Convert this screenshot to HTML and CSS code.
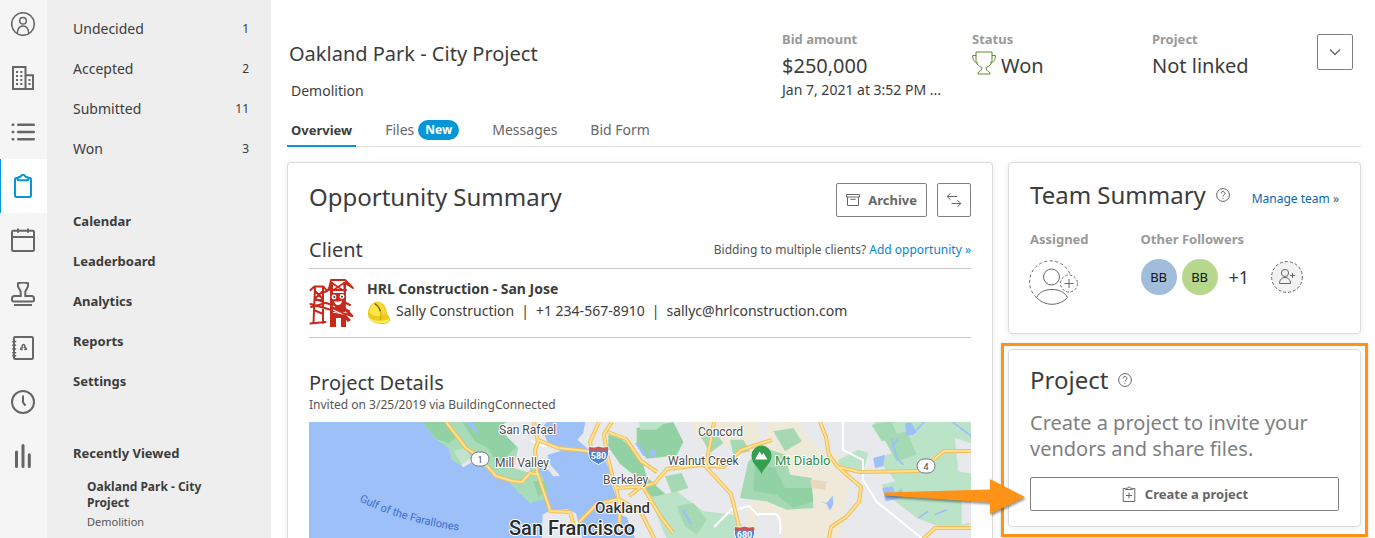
FILE: index.html
```html
<!DOCTYPE html>
<html lang="en">
<head>
<meta charset="utf-8">
<title>Oakland Park - City Project</title>
<link rel="stylesheet" href="styles.css">
</head>
<body>
<div class="app">
  <nav class="rail" aria-label="Main">
    <a class="rail-item rail-first" href="#" aria-label="Account"><svg class="ic24" viewBox="0 0 24 24"><circle cx="12" cy="12" r="11.3"/><circle cx="12" cy="8.800" r="3.300"/><path d="M6.300 21.500c.2-4.800 2.200-7.600 5.700-7.600s5.500 2.800 5.700 7.600"/></svg></a>
    <a class="rail-item" href="#" aria-label="Company"><svg class="ic24 thick" viewBox="0 0 24 24"><path d="M2 1h12.500v22H2zM14.500 9.300H22V23h-7.500"/><path class="dots" d="M5 6h2M9.300 6h2M5 10h2M9.300 10h2M5 14h2M9.300 14h2M5 18h2M9.300 18h2M17.500 14h2M17.500 18h2"/></svg></a>
    <a class="rail-item" href="#" aria-label="List"><svg class="ic24 heavy" viewBox="0 0 24 24"><path d="M7.200 4.800h15.600M7.200 12h15.600M7.200 19.200h15.600M1.700 4.800h.6M1.700 12h.6M1.700 19.200h.6"/></svg></a>
    <a class="rail-item active" href="#" aria-label="Bids"><svg class="ic24 thick" viewBox="0 0 24 24"><path d="M6.500 4H5.200Q4 4 4 5.200v16.600Q4 23 5.200 23h13.600q1.200 0 1.200-1.200V5.200Q20 4 18.800 4h-1.300"/><path d="M6.500 5q0-2 3-2.300Q10.500.8 12 .8t2.500 1.900q3 .3 3 2.300 0 1.300-1.200 1.300H7.700Q6.500 6.300 6.500 5z"/></svg></a>
    <a class="rail-item" href="#" aria-label="Calendar"><svg class="ic24 thick" viewBox="0 0 24 24"><rect x="1" y="2.800" width="22" height="20.200" rx="1.200"/><path d="M1 9h22M7 .5v4.300M17 .5v4.300"/></svg></a>
    <a class="rail-item" href="#" aria-label="Approvals"><svg class="ic24 thick" viewBox="0 0 24 24"><path d="M9.700 14V9.500L7 4.500V1.200Q12-.2 17 1.200v3.300l-2.700 5V14h6.200q2.500 0 2.500 2.600v1.200q0 1.700-1.700 1.700H2.700Q1 19.500 1 17.800v-1.200Q1 14 3.500 14zM3 23h18"/></svg></a>
    <a class="rail-item" href="#" aria-label="Contacts"><svg class="ic24" viewBox="0 0 24 24"><rect class="w2" x="3" y="1" width="19" height="22" rx="1.200"/><path d="M1.200 5.500h4M1.200 9.300h4M1.200 13h4M1.200 16.700h4M1.200 19.700h4"/><path d="M9.500 13.800v-.6q0-1.400 1.900-1.700-.9-2.700 1.100-2.900 2 .2 1.100 2.900 1.900.3 1.900 1.700v.6M9.500 13.500h2.200M13.300 13.500h2.200"/></svg></a>
    <a class="rail-item" href="#" aria-label="History"><svg class="ic24 thick" viewBox="0 0 24 24"><circle cx="12" cy="12" r="11"/><path d="M12 5.500v7l2.500 3"/></svg></a>
    <a class="rail-item" href="#" aria-label="Statistics"><svg class="ic24 bars" viewBox="0 0 24 24"><path d="M5.500 8v14.500M12 1.500v21M18.300 10.700v11.800"/></svg></a>
  </nav>

  <aside class="side">
    <ul class="side-group">
      <li><a class="side-link" href="#"><span>Undecided</span><span class="count">1</span></a></li>
      <li><a class="side-link" href="#"><span>Accepted</span><span class="count">2</span></a></li>
      <li><a class="side-link" href="#"><span>Submitted</span><span class="count">11</span></a></li>
      <li><a class="side-link" href="#"><span>Won</span><span class="count">3</span></a></li>
    </ul>
    <ul class="side-group strong">
      <li><a class="side-link" href="#">Calendar</a></li>
      <li><a class="side-link" href="#">Leaderboard</a></li>
      <li><a class="side-link" href="#">Analytics</a></li>
      <li><a class="side-link" href="#">Reports</a></li>
      <li><a class="side-link" href="#">Settings</a></li>
    </ul>
    <h2 class="side-title">Recently Viewed</h2>
    <a class="recent" href="#"><strong>Oakland Park - City Project</strong><span>Demolition</span></a>
  </aside>

  <main class="main">
    <header class="head">
      <div class="head-title">
        <h1>Oakland Park - City Project</h1>
        <p>Demolition</p>
      </div>
      <div class="stat stat-bid">
        <span class="label">Bid amount</span>
        <span class="value">$250,000</span>
        <span class="date">Jan 7, 2021 at 3:52 PM ...</span>
      </div>
      <div class="stat stat-status">
        <span class="label">Status</span>
        <span class="value"><svg class="trophy" viewBox="0 0 24 24"><path d="M4 1h16v8.500c0 3.500-3 6-6 7 0 1.800 1 3.500 4 5.200V23H6v-1.300c3-1.700 4-3.400 4-5.200-3-1-6-3.500-6-7zM4 4.500H.7c0 4.500 1.300 6.500 5 7.500M20 4.500h3.300c0 4.500-1.300 6.500-5 7.500"/></svg>Won</span>
      </div>
      <div class="stat stat-project">
        <span class="label">Project</span>
        <span class="value">Not linked</span>
      </div>
      <button class="more" type="button" aria-label="More actions"><svg viewBox="0 0 14 14"><path d="M2 4.500l5 5 5-5"/></svg></button>
    </header>

    <nav class="tabs" aria-label="Sections">
      <a class="tab current" href="#">Overview</a>
      <a class="tab" href="#">Files<span class="pill">New</span></a>
      <a class="tab" href="#">Messages</a>
      <a class="tab" href="#">Bid Form</a>
    </nav>

    <div class="cols">
      <section class="card summary">
        <div class="card-head">
          <h2>Opportunity Summary</h2>
          <div class="actions">
            <button class="btn archive" type="button"><svg class="ic14" viewBox="0 0 14 14"><path d="M.5 1.500h13v2.500H.5zM1.500 4v8.500h11V4M4.300 6.300h5.400"/></svg>Archive</button>
            <button class="btn square" type="button" aria-label="Swap"><svg class="ic16" viewBox="0 0 16 16"><path d="M11 4.500H1.200M4.500 1.200L1.200 4.500l3.300 3.300M5.500 11.500h9.300M11.500 8.200l3.300 3.300-3.300 3.300"/></svg></button>
          </div>
        </div>
        <div class="client-head">
          <h3>Client</h3>
          <p>Bidding to multiple clients? <a href="#">Add opportunity »</a></p>
        </div>
        <div class="client">
          <svg class="logo" viewBox="0 0 46 48" aria-hidden="true">
            <g fill="none" stroke="#c72a1c" stroke-width="2" stroke-linecap="round" stroke-linejoin="round">
              <path d="M1.500 11l4-3.500h9l3 4M6 8L4.500 44M14 8v36M1.500 44.500l15-1.500M6 12l8 8M5.500 20L14 12M5.500 21H14M15 13c5 0 6-6 7-12h14l7 7M36 4l8 5M21 11h16M1.500 25l42 12M6 20l34 12M2 28l13-3.500M37 24l4 2M5 31l9 4"/>
            </g>
            <path fill="#c72a1c" d="M21 3h3v45h-3zM34 3h3v45h-5v-9h-5v9h-6V33l16 3zM22 14h14v19H22zM36 28l8 8-2 2-8-8zM37 36l5 5-3 2-4-4z"/>
            <path fill="none" stroke="#c72a1c" stroke-width="1.600" d="M23 4l12 8M35 4l-12 8"/>
            <path fill="none" stroke="#fff" stroke-width="1.200" d="M24 31l9 4M24 27l2 1"/>
            <circle cx="25" cy="18" r="2.400" fill="#fff"/><circle cx="33" cy="17.500" r="2.400" fill="#fff"/>
            <circle cx="25.300" cy="18" r="1" fill="#23356e"/><circle cx="33" cy="17.700" r="1" fill="#23356e"/>
            <path fill="#fff" d="M25 22q4 1.500 8-.5-.5 4.500-4 4.500-3 0-4-4z"/>
          </svg>
          <div class="client-info">
            <strong>HRL Construction - San Jose</strong>
            <div class="contact">
              <svg class="helmet" viewBox="0 0 24 24" aria-hidden="true">
                <path fill="#eccb1c" d="M1 14C.3 7 5 1 10.500.8 16 1 19.500 6 19.800 12l3.400 5.500c.6 3.500-4 5.900-9.200 5.500C8 22.500 1.500 20 1 14z"/>
                <path fill="#fbe748" d="M2.500 11.500C3 6 5 3.500 8 2c3.500 3 5.500 7.500 5.700 12.500C9.500 16 5 15 2.500 11.500z"/>
                <path fill="#f8dc35" d="M10.500 1.500c4.500.5 7.500 5 8 10.500l-4 2.500c-.3-5-1.500-9-5-12.500z"/>
                <path fill="#fdee62" d="M1.500 16c3 3 7 4 11 3.700 4.500.5 8-.7 9.800-2.700 1 3-3 5.300-8 5-6-.5-11-2-12.800-6z"/>
                <path fill="none" stroke="#6c5a10" stroke-width="1.300" d="M7.500 2.500c3 2 5 4.500 6 8"/>
                <path fill="none" stroke="#cda70f" d="M13.500 10c.7 2 .6 5-.3 9"/>
              </svg>
              <span>Sally Construction</span><span class="bar">|</span><span>+1 234-567-8910</span><span class="bar">|</span><span>sallyc@hrlconstruction.com</span>
            </div>
          </div>
        </div>
        <h3 class="details-title">Project Details</h3>
        <p class="details-note">Invited on 3/25/2019 via BuildingConnected</p>
        <svg class="map" viewBox="0 0 662 160" preserveAspectRatio="xMinYMin slice" role="img" aria-label="Map of the San Francisco Bay Area">
          <rect width="662" height="160" fill="#9dc0f9"/>
          <g transform="translate(-4 -4) scale(.3333)">
            <path fill="#a8dcb8" d="M345 0l45 62 40 28 10 35 35 22 25-20 62 34 50 30 28 32 37 34 20-16V0z"/>
            <path fill="#92d1a4" d="M350 8l42 55 40 12 20-15-30-50zM470 10l40 60 40 20 30 50 60-60 20-70z"/>
            <path fill="#bfe3cb" d="M445 100l40-12 15 30-30 20z"/>
            <path fill="#e7e9ec" d="M468 140l27-18 10 8-30 18zM590 20l20-10h85v160l-70-20 15-60-40-40z"/>
            <path fill="#9dc0f9" d="M480 12l30 30 12 5-20-35zM478 90l22 12-2 12z"/>
          </g>
          <g transform="translate(221 -4) scale(.3333)">
            <path fill="#e7e9ec" d="M0 0h62l-28 30 20 45 38 24-40 12 10 30 28 32-20 2-24-30-36-5z"/>
            <path fill="#a8dcb8" d="M0 145l30 20 25 45-15 35-40 10z"/>
            <path fill="#92d1a4" d="M10 190l35 0 10 25-30 22z"/>
            <path fill="#e7e9ec" d="M38 290l20-12 55-4 25 12 20 80-10 150H30zM168 0l-8 45-18 20 35 30 38 15 20 35 10 55 15 40-60 18 30 15 60 25 40 100 100 100h1000V0z"/>
            <path fill="#efe9da" d="M480 0h210v90l-40 20-60-30-40 10-50-30zM720 0h220l20 180-30 180 140 160H650V300z"/>
            <path fill="#92d1a4" d="M235 50l40 12 60 60 15 55 60 55-45 5-35-50-60-50-35-50zM320 30l110-18 30 60-20 40-90 10-30-40z"/>
            <path fill="#bbe3c8" d="M325 0l95 0-40 35-50 0zM360 240l80-20 80 60 90 10 50 60-60 100H450l-50-110z"/>
            <path fill="#a4d9b3" d="M405 175l50-10 20 45-50 15zM440 265l50-10 40 50-30 45-35-25zM510 50l40-15 30 40-40 30zM600 65l40 0 20 35-50 10z"/>
            <path fill="#9dc0f9" d="M315 75l25 40 8-5-20-35zM358 98l22-5-2 20-20 5zM455 275l25 45 6-4-22-40z"/>
          </g>
          <g transform="translate(446 -4) scale(.3333)">
            <path fill="#a4d9b3" d="M-20 130l50-40 60 20 15 60 65 10 5 90-80 5-60-25-80-10zM55 40l60-10 25 40-50 30z"/>
            <path fill="#92d1a4" d="M0 140l60 10 30 60 80 0 5 40-60 20-50-40-70-10z"/>
            <path fill="#e7e9ec" d="M135 0h220l-10 60 45 60-60 60-10-55-60-10-60-20-50-50zM0 290l70-5 10 80-60 30-20-30z"/>
            <path fill="#bbe3c8" d="M345 0h320v240l-40 40 20 40-80 10-80-30-90-70-20-40 20-30-25-40 60-20-40-50zM250 125l60-30 30 10-15 55-75-10z"/>
            <path fill="#a4d9b3" d="M350 20l60-10 20 50-50 10zM385 60l70-20 30 70-60 20z"/>
            <path fill="#e7e9ec" d="M600 60l60 20v90l-50-10zM360 170l40-10 20 30-40 10zM620 250h40v60l-40 10z"/>
            <path fill="#e7d9bd" d="M165 185l50 5-5 25-40-5z"/>
            <path fill="#9dc0f9" d="M195 250l20 5 18-22 2 25-10 20-10-20zM382 210l30-5 10 20 20-15 0 30-50 10zM355 120l35-10-5 35-25 5zM450 15l20 0 15 30-30 10z"/>
            <path fill="none" stroke="#9dc0f9" stroke-width="5" d="M430 60l-20 30M470 50l40-40M590 10l60 45M410 60l15 60 20 20M490 300l30-20M540 290l35-15"/>
          </g>
          <g fill="none" stroke="#fff" stroke-width="2">
            <path d="M534 0v28l20 10v20l14 22 47 38M446 92h20q7 2 5 20M222 18q10 7 16 6M425 88l15-4 10 10M405 105l20-20"/>
          </g>
          <g fill="none" stroke="#f2bd5b" stroke-width="4" stroke-linejoin="round">
            <path d="M137 0l20 26 12 8 18 20 16 5 10 1 8-9 9 2M225 0l4 20-3 8 2 22 12 35 1 4 20 1 4 14M229 18l20 8 30 3M290 0l-9 20 1 4M303 0l-8 12 3 20 5 20 7 26 1 30M299 10l18 7 15 22 16 11M308 66l16-1 14-1M270 100l18-18 22-5 22 13 15 30M320 74l12-9 14-4 12-14 34-4 22 2 18-17 15-5 16-5M334 65l18 30 12 16M405 0l-7 38-2 6 26 28 5 20 7 30M511 0l6 15 3 18 9 12 22 5 60-1M529 45l23 20-2 15-13 15-15 10-3 18M617 44l18-15h27M662 106h-36l-15 14"/>
          </g>
          <g fill="none" stroke="#fde293" stroke-width="2" stroke-linejoin="round">
            <path d="M137 0l20 26 12 8 18 20 16 5 10 1 8-9 9 2M225 0l4 20-3 8 2 22 12 35 1 4 20 1 4 14M229 18l20 8 30 3M290 0l-9 20 1 4M303 0l-8 12 3 20 5 20 7 26 1 30M299 10l18 7 15 22 16 11M308 66l16-1 14-1M270 100l18-18 22-5 22 13 15 30M320 74l12-9 14-4 12-14 34-4 22 2 18-17 15-5 16-5M334 65l18 30 12 16M405 0l-7 38-2 6 26 28 5 20 7 30M511 0l6 15 3 18 9 12 22 5 60-1M529 45l23 20-2 15-13 15-15 10-3 18M617 44l18-15h27M662 106h-36l-15 14"/>
          </g>
          <g fill="#fff" stroke="#757a80"><rect x="162" y="30" width="18" height="14" rx="7"/><rect x="608" y="37" width="18" height="14" rx="7"/></g>
          <g class="shield-no"><text x="171" y="41">1</text><text x="617" y="48">4</text></g>
          <g><path fill="#4f86d0" stroke="#fff" d="M280 25h19q2 7-1 12-3 3-8.500 5.500Q284 40 281 37q-3-5-1-12z"/><path fill="#d2554d" d="M280 25l5 1 4.500-1.500 4.500 1.500 5-1 .5 3.500h-20z"/></g>
          <g><path fill="#4f86d0" stroke="#fff" d="M426 105h19q2 7-1 12-3 3-8.500 5.500Q430 120 427 117q-3-5-1-12z"/><path fill="#d2554d" d="M426 105l5 1 4.500-1.500 4.500 1.500 5-1 .5 3.500h-20z"/></g>
          <g class="shield-label"><text x="289.500" y="37">580</text><text x="435.500" y="116">680</text></g>
          <path fill="#34a04f" d="M452.500 52c-2-6-10-10-10-18.500a10 10 0 0 1 20 0c0 8.500-8 12.500-10 18.500z"/>
          <path fill="#fff" d="M446 37.500l4.500-8 2.500 3.500 1.500-2 4 6.500z"/>
          <g class="town">
            <text x="190" y="12">San Rafael</text><text x="186" y="45">Mill Valley</text><text x="389" y="14">Concord</text>
            <text x="359" y="43">Walnut Creek</text><text x="294" y="62">Berkeley</text>
            <text class="city" x="286" y="91">Oakland</text><text class="big" x="200" y="113">San Francisco</text>
            <text class="peak" x="466" y="43">Mt Diablo</text>
          </g>
          <path id="gulf" fill="none" d="M50 79Q95 102 160 110"/>
          <text class="sea"><textPath href="#gulf">Gulf of the Farallones</textPath></text>
          <path fill="#c5342f" d="M553 116h19v6h-19z"/>
        </svg>
      </section>

      <div class="right">
        <section class="card team">
          <div class="team-head">
            <h2>Team Summary</h2>
            <svg class="help" viewBox="0 0 14 14"><circle cx="7" cy="7" r="6.400"/><path d="M5 5.500c0-2.700 4-2.500 4-.2 0 1.500-2 1.500-2 3.200M7 9.800v1"/></svg>
            <a href="#">Manage team »</a>
          </div>
          <div class="people">
            <div class="assigned">
              <span class="label">Assigned</span>
              <button class="bare" type="button" aria-label="Assign a person"><svg class="assign" viewBox="0 0 48 44">
                <path stroke-dasharray="3 2.500" d="M6.500 36.500A21 21 0 1 1 40 13"/><path d="M6.500 36.500a21 21 0 0 0 31 0M6.500 36.500c3-5.500 8-8 15.500-8s12.500 2.500 15.500 8"/><circle cx="21.500" cy="16" r="8"/>
                <circle cx="39" cy="22.500" r="8.500" stroke-dasharray="2.500 2"/><path d="M39 18v9M34.500 22.500h9"/></svg></button>
            </div>
            <div class="followers">
              <span class="label">Other Followers</span>
              <div class="avatars"><span class="avatar blue">BB</span><span class="avatar green">BB</span><span class="extra">+1</span>
                <button class="bare add" type="button" aria-label="Add follower"><svg viewBox="0 0 32 32"><circle class="ring" cx="16" cy="16" r="15.400"/><circle cx="14" cy="12" r="3.600"/><path d="M8.500 22.500c0-8 11-8 11 0zM21.500 12v5M19 14.500h5"/></svg></button></div>
            </div>
          </div>
        </section>

        <section class="card project">
          <div class="project-head"><h2>Project</h2><svg class="help" viewBox="0 0 14 14"><circle cx="7" cy="7" r="6.400"/><path d="M5 5.500c0-2.700 4-2.500 4-.2 0 1.500-2 1.500-2 3.200M7 9.800v1"/></svg></div>
          <p>Create a project to invite your vendors and share files.</p>
          <button class="btn wide" type="button"><svg class="ic16" viewBox="0 0 16 16"><path d="M4.500 2.500H2.200v13h11.600v-13h-2.300M4.500 3.500q0-1.500 2-1.500Q8-.5 9.500 2q2 0 2 1.500zM8 6.500v6M5 9.500h6"/></svg>Create a project</button>
          <span class="frame"></span>
          <svg class="arrow" viewBox="0 0 144 40" aria-hidden="true"><path d="M3 15.500q-1.500 1 0 3l105 7V37l35-17L108 2v10.500z"/></svg>
        </section>
      </div>
    </div>
  </main>
</div>
</body>
</html>
```

FILE: styles.css
```css
* { box-sizing: border-box; }
body { margin: 0; font: 14px/18px "Noto Sans", "Open Sans", sans-serif; color: #3c3c3c; background: #fff; }
h1, h2, h3, p, ul { margin: 0; padding: 0; font-weight: 400; }
ul { list-style: none; }
a { color: inherit; text-decoration: none; }
button { font: inherit; cursor: pointer; }
svg { display: block; flex: none; fill: none; stroke: #666; }

.app { display: grid; grid-template-columns: 47px 224px 1fr; height: 100vh; overflow: hidden; }

.rail { background: #f5f5f5; }
.rail-item { display: flex; align-items: center; justify-content: center; height: 54px; padding-right: 1px; }
.rail-first { height: 51px; padding-bottom: 3px; }
.rail-item.active { background: #fff; border-left: 1px solid #0696d7; padding-right: 2px; }
.active svg { stroke: #0696d7; }
.ic24 { width: 24px; height: 24px; stroke-width: 1.5; }
.thick, .w2 { stroke-width: 2; }
.dots { stroke-width: 2; }
.heavy { stroke-width: 2.4; stroke-linecap: round; }
.bars { stroke-width: 3; stroke-linecap: round; }

.side { background: #eee; padding: 9px 22px 0 26px; }
.side-group { margin-bottom: 32px; }
.side-link { display: flex; align-items: center; justify-content: space-between; height: 40px; }
.count { font-size: 12px; }
.strong, .side-title { font-size: 13px; font-weight: 700; }
.side-title { line-height: 40px; }
.recent { display: block; padding: 6px 28px 0 14px; font-size: 12px; line-height: 16px; }
.recent strong, .recent span { display: block; }
.recent strong { font-weight: 700; }
.recent span { margin-top: 3px; font-size: 11px; color: #555; }

.main { padding: 0 14px 0 16px; min-width: 0; }
.head { display: flex; height: 113px; padding: 30px 8px 0 0; }
.head-title { flex: 1; padding: 10px 0 0 2px; }
h1 { font-size: 20px; line-height: 28px; }
.head-title p { margin: 14px 0 0 2px; }
.stat { display: flex; flex-direction: column; white-space: nowrap; }
.stat-bid { width: 190px; }
.stat-status { width: 180px; }
.stat-project { width: 165px; }
.label { font-size: 13px; font-weight: 700; color: #999; }
.value { display: flex; gap: 5px; font-size: 20px; line-height: 32px; margin-top: 2px; }
.date { font-size: 14px; line-height: 16px; }
.trophy { width: 24px; height: 24px; margin-top: 1px; stroke: #5f8a2c; }
.more { width: 36px; height: 36px; margin-top: 4px; padding: 0; border: 1px solid #808080; border-radius: 2px; background: #fff; display: grid; place-items: center; }
.more svg { width: 14px; height: 14px; stroke-width: 1.3; }

.tabs { display: flex; gap: 25px; height: 34px; border-bottom: 1px solid #dcdcdc; color: #666; }
.tab { display: flex; align-items: center; gap: 4px; height: 34px; padding: 2px 4px 0; border-bottom: 2px solid transparent; }
.tab.current { border-color: #0696d7; color: #3c3c3c; font-size: 13px; font-weight: 700; }
.pill { background: #0696d7; color: #fff; font-size: 12px; font-weight: 700; line-height: 20px; padding: 0 7px; border-radius: 10px; }

.cols { display: grid; grid-template-columns: 2fr 1fr; gap: 15px; margin-top: 15px; }
.card { border: 1px solid #dcdcdc; border-radius: 4px; box-shadow: 0 1px 6px rgba(0, 0, 0, .08); background: #fff; padding: 20px 21px; min-width: 0; }
.card h2 { font-size: 24px; line-height: 32px; }
.card h3 { font-size: 20px; line-height: 28px; }
.card-head, .actions, .client-head, .client, .contact, .team-head, .project-head, .avatars { display: flex; align-items: center; }
.card-head, .client-head { justify-content: space-between; }
.card-head { height: 34px; }
.card-head h2 { margin-bottom: 6px; }
.actions { gap: 10px; }
.btn { display: flex; align-items: center; justify-content: center; gap: 8px; height: 34px; padding: 0 8px; border: 1px solid #808080; border-radius: 2px; background: #fff; color: #666; font-size: 13px; font-weight: 700; }
.archive { padding: 0 9px; }
.square { width: 34px; padding: 0; }
.wide { width: 100%; }
.ic14 { width: 14px; height: 14px; }
.ic16 { width: 16px; height: 16px; }
.client-head { height: 52px; padding-top: 14px; border-bottom: 1px solid #c6c6c6; }
.client-head p { font-size: 12px; color: #555; }
.client-head a { color: #0a85cc; }
.client { gap: 12px; height: 69px; border-bottom: 1px solid #c6c6c6; }
.logo { width: 46px; height: 48px; stroke: none; }
.client-info { padding-bottom: 4px; }
.client-info strong { display: block; line-height: 20px; }
.contact { white-space: nowrap; height: 24px; }
.helmet { width: 24px; height: 24px; margin: 4px 5px 0 0; stroke: none; }
.bar { padding: 0 7px; }
.details-title { margin-top: 31px; }
.details-note { font-size: 12px; line-height: 16px; color: #555; margin: 0 0 9px; }

.map { width: 100%; height: 160px; stroke: none; font-family: Roboto, sans-serif; }
.map text { stroke: none; }
.map .town text { font-size: 12px; fill: #4a4d50; stroke: #fff; stroke-width: 2px; paint-order: stroke; }
.map .town .city { font-size: 15px; font-weight: 500; fill: #333; }
.map .town .big { font-size: 20px; font-weight: 500; fill: #2b2b2b; }
.map .town .peak { font-size: 13px; fill: #2d8f4a; }
.sea { font-size: 11px; fill: #3d6fca; }
.shield-no { font-size: 9px; fill: #444; text-anchor: middle; }
.shield-label { font-size: 9px; font-weight: 700; fill: #fff; text-anchor: middle; }

.right { display: flex; flex-direction: column; gap: 15px; }
.team { padding: 16px 21px 28px; }
.team-head { gap: 10px; }
.team-head a { margin: 8px 0 0 auto; font-size: 12px; color: #0b66ab; white-space: nowrap; }
.help { width: 14px; height: 14px; }
.people { display: flex; gap: 52px; margin-top: 19px; }
.people .label { display: block; }
.bare { display: block; padding: 0; border: 0; background: none; }
.assign { width: 48px; height: 44px; margin-top: 13px; overflow: visible; }
.avatars { margin-top: 11px; }
.avatar { width: 36px; height: 36px; margin-right: 5px; border-radius: 50%; line-height: 36px; text-align: center; font-size: 13px; color: #111; }
.blue { background: #a2bcdc; }
.green { background: #b7d88c; }
.extra { margin-left: 6px; font-size: 18px; }
.add { margin-left: 22px; }
.add svg { width: 32px; height: 32px; }
.ring { fill: #f2f2f2; stroke-dasharray: 3 2; }

.project { position: relative; padding: 14px 21px 15px; }
.project-head { gap: 10px; }
.project p { font-size: 20px; line-height: 26px; color: #808080; margin: 14px 0 15px; }
.frame { position: absolute; inset: -7px -8px -11px; border: 3px solid #ff9318; box-shadow: 0 1px 3px rgba(0, 0, 0, .2); pointer-events: none; }
.arrow { position: absolute; left: -127px; top: 127px; width: 144px; height: 40px; fill: #ff9318; stroke: none; filter: drop-shadow(1px 2px 1px rgba(0, 0, 0, .4)); pointer-events: none; }
```
